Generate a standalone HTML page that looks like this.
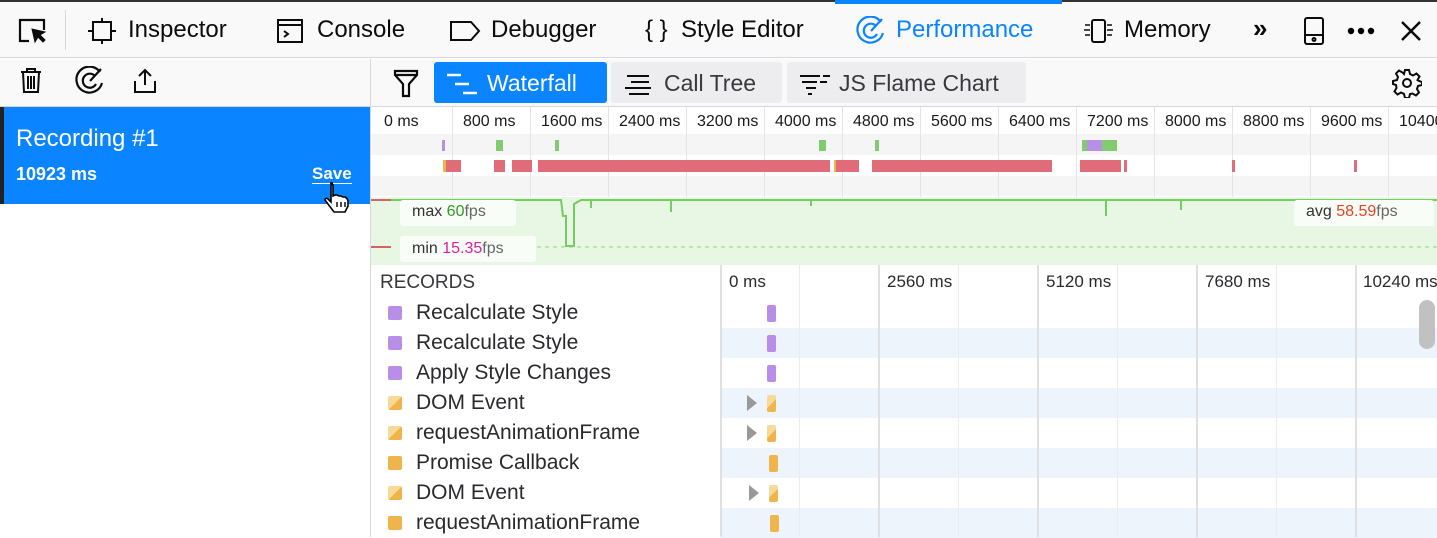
<!DOCTYPE html>
<html><head><style>
*{box-sizing:border-box;margin:0;padding:0}
body{width:1437px;height:537px;overflow:hidden;background:#fff;font-family:"Liberation Sans",sans-serif;position:relative;color:#0c0c0d}
.a{position:absolute;white-space:nowrap}
.tab{position:absolute;top:16px;font-size:24px;color:#0c0c0d;white-space:nowrap}
.tk{position:absolute;top:113px;font-size:16px;color:#18191a;white-space:nowrap}
.gl{position:absolute;top:107px;width:1px;height:90px;background:#e4e4e6}
.nm{position:absolute;left:416px;font-size:21px;color:#2a2a2e;white-space:nowrap}
.sq{position:absolute;left:388px;width:14px;height:14px;border-radius:2px}
.bar{position:absolute;width:10px;height:17px;border-radius:2px}
</style></head><body>
<div class="a" style="left:0;top:0;width:1437px;height:2px;background:#333"></div>
<div class="a" style="left:0;top:2px;width:1437px;height:56px;background:#f9f9fa;border-bottom:1px solid #d7d7db"></div>
<div class="a" style="left:835px;top:0;width:227px;height:4px;background:#0a84ff"></div>
<svg class="a" style="left:17px;top:17px" width="32" height="28" viewBox="0 0 32 28" fill="none" stroke="#0c0c0d" stroke-width="2.2"><path d="M12 24H3V3h24v10"/><path d="M15 12l3 13 3-5 5 5 2-2-5-5 5-3z" fill="#0c0c0d" stroke-width="1"/></svg>
<div class="a" style="left:65px;top:10px;width:1px;height:40px;background:#d7d7db"></div>
<svg class="a" style="left:87px;top:18px" width="30" height="26" viewBox="0 0 30 26" fill="none" stroke="#0c0c0d" stroke-width="2"><rect x="6" y="4" width="18" height="18"/><path d="M1 13h5M24 13h5M15 0v4M15 22v4"/></svg>
<div class="tab" style="left:128px">Inspector</div>
<svg class="a" style="left:276px;top:18px" width="28" height="26" viewBox="0 0 28 26" fill="none" stroke="#0c0c0d" stroke-width="2"><rect x="2" y="2" width="24" height="22"/><path d="M2 7h24M8 13l4 3-4 3"/></svg>
<div class="tab" style="left:317px">Console</div>
<svg class="a" style="left:449px;top:19px" width="32" height="24" viewBox="0 0 32 24" fill="none" stroke="#0c0c0d" stroke-width="2"><path d="M2 3h20l8 9-8 9H2z"/></svg>
<div class="tab" style="left:491px">Debugger</div>
<div class="tab" style="left:645px">{ }&nbsp;&nbsp;Style Editor</div>
<svg class="a" style="left:855px;top:16px" width="32" height="30" viewBox="0 0 32 30" fill="none" stroke="#0a84ff" stroke-width="2.2"><path d="M26 6A13 13 0 1 0 28 17"/><path d="M21 10A7 7 0 1 0 22 18"/><path d="M16 15L27 3"/></svg>
<div class="tab" style="left:896px;color:#0a84ff">Performance</div>
<svg class="a" style="left:1082px;top:17px" width="34" height="28" viewBox="0 0 34 28" fill="none" stroke="#0c0c0d" stroke-width="2"><rect x="10" y="3" width="13" height="22" rx="2"/><path d="M3 8h5M2 13h6M3 18h5M25 8h5M25 13h6M25 18h5" stroke-width="1.5"/></svg>
<div class="tab" style="left:1124px">Memory</div>
<div class="tab" style="left:1253px;font-weight:bold;font-size:26px;top:13px">»</div>
<svg class="a" style="left:1303px;top:16px" width="22" height="30" viewBox="0 0 22 30" fill="none" stroke="#0c0c0d" stroke-width="2"><rect x="2" y="2" width="18" height="26" rx="2"/><path d="M2 19h18"/><circle cx="11" cy="23.5" r="1.5"/></svg>
<svg class="a" style="left:1346px;top:26px" width="32" height="10"><circle cx="5" cy="5" r="3.2"/><circle cx="15" cy="5" r="3.2"/><circle cx="25" cy="5" r="3.2"/></svg>
<svg class="a" style="left:1399px;top:19px" width="24" height="24" viewBox="0 0 24 24" stroke="#0c0c0d" stroke-width="2.5"><path d="M3 3l18 18M21 3L3 21"/></svg>
<div class="a" style="left:0;top:59px;width:1437px;height:48px;background:#f9f9fa;border-bottom:1px solid #d7d7db"></div>
<div class="a" style="left:370px;top:59px;width:1px;height:478px;background:#d7d7db"></div>
<svg class="a" style="left:18px;top:67px" width="26" height="28" viewBox="0 0 26 28" fill="none" stroke="#0c0c0d" stroke-width="2"><path d="M3 5h20M9 5V2h8v3M5 5l1 20h14l1-20M10 9v13M13 9v13M16 9v13"/></svg>
<svg class="a" style="left:74px;top:66px" width="32" height="30" viewBox="0 0 32 30" fill="none" stroke="#0c0c0d" stroke-width="2.2"><path d="M26 6A13 13 0 1 0 28 17"/><path d="M21 10A7 7 0 1 0 22 18"/><path d="M16 15L27 3"/></svg>
<svg class="a" style="left:131px;top:67px" width="28" height="28" viewBox="0 0 28 28" fill="none" stroke="#0c0c0d" stroke-width="2"><path d="M14 18V3M8 9l6-6 6 6M4 14v11h20V14"/></svg>
<svg class="a" style="left:393px;top:68px" width="26" height="30" viewBox="0 0 26 30" fill="none" stroke="#0c0c0d" stroke-width="2.2"><path d="M2 3h22v4l-8 9v12h-6V16L2 7z"/><path d="M2 7h22"/></svg>
<div class="a" style="left:434px;top:62px;width:173px;height:41px;background:#0a84ff;border-radius:3px"></div>
<svg class="a" style="left:445px;top:72px" width="34" height="24" viewBox="0 0 34 24" stroke="#fff" stroke-width="2.5"><path d="M2 3h14M10 12h14M18 21h14"/></svg>
<div class="tab" style="left:487px;top:70px;color:#fff;font-size:23px">Waterfall</div>
<div class="a" style="left:611px;top:62px;width:171px;height:41px;background:#ededf0;border-radius:3px"></div>
<svg class="a" style="left:623px;top:72px" width="30" height="24" viewBox="0 0 30 24" stroke="#0c0c0d" stroke-width="2"><path d="M4 4h22M8 10h18M2 16h26M6 22h20"/></svg>
<div class="tab" style="left:664px;top:70px;font-size:23px;color:#38383d">Call Tree</div>
<div class="a" style="left:787px;top:62px;width:239px;height:41px;background:#ededf0;border-radius:3px"></div>
<svg class="a" style="left:798px;top:72px" width="34" height="24" viewBox="0 0 34 24" stroke="#0c0c0d" stroke-width="2"><path d="M2 4h20M25 4h7M4 10h15M22 10h7M8 16h10M10 22h4"/></svg>
<div class="tab" style="left:839px;top:70px;font-size:23px;color:#38383d">JS Flame Chart</div>
<svg class="a" style="left:1392px;top:68px" width="30" height="30" viewBox="0 0 30 30" fill="none" stroke="#0c0c0d" stroke-width="2"><path d="M13 2h4l1 4 3 1.5 3.5-2 3 3-2 3.5L27 13l3 1v3l-4 1-1 3 2 3.5-3 3-3.5-2L18 26l-1 4h-4l-1-4-3-1.5-3.5 2-3-3 2-3.5L4 17l-3-1v-3l4-1 1-3-2-3.5 3-3 3.5 2L12 6z"/><circle cx="15" cy="15" r="4"/></svg>
<div class="a" style="left:0;top:107px;width:4px;height:97px;background:#222"></div>
<div class="a" style="left:4px;top:107px;width:366px;height:97px;background:#0a84ff"></div>
<div class="a" style="left:16px;top:125px;color:#fff;font-size:24px">Recording #1</div>
<div class="a" style="left:16px;top:164px;color:#fff;font-size:18px;font-weight:bold">10923 ms</div>
<div class="a" style="left:312px;top:164px;color:#fff;font-size:17px;font-weight:bold;border-bottom:1px solid #fff;line-height:19px">Save</div>
<svg class="a" style="left:322px;top:180px" width="34" height="34" viewBox="0 0 34 34"><path d="M8 3c2 0 3 1 3 3v10l2-1h2l2 1h2l2 1h2c2 1 3 3 3 5v4l-3 6H12l-6-8-3-4c0-2 2-2 3-1l3 3V6c0-2 1-3 2-3z" fill="#fff" stroke="#000" stroke-width="1.6"/><path d="M15 22v5M19 22v5M23 22v5" stroke="#000" stroke-width="1.4"/></svg>
<div class="a" style="left:371px;top:134px;width:1066px;height:21px;background:#f5f5f6"></div>
<div class="a" style="left:371px;top:176px;width:1066px;height:20px;background:#f5f5f6"></div>
<div class="gl" style="left:452px"></div><div class="gl" style="left:530px"></div><div class="gl" style="left:608px"></div><div class="gl" style="left:686px"></div><div class="gl" style="left:764px"></div><div class="gl" style="left:842px"></div><div class="gl" style="left:920px"></div><div class="gl" style="left:998px"></div><div class="gl" style="left:1076px"></div><div class="gl" style="left:1154px"></div><div class="gl" style="left:1232px"></div><div class="gl" style="left:1310px"></div><div class="gl" style="left:1388px"></div>
<div class="tk" style="left:384px">0 ms</div><div class="tk" style="left:463px">800 ms</div><div class="tk" style="left:541px">1600 ms</div><div class="tk" style="left:619px">2400 ms</div><div class="tk" style="left:697px">3200 ms</div><div class="tk" style="left:775px">4000 ms</div><div class="tk" style="left:853px">4800 ms</div><div class="tk" style="left:931px">5600 ms</div><div class="tk" style="left:1009px">6400 ms</div><div class="tk" style="left:1087px">7200 ms</div><div class="tk" style="left:1165px">8000 ms</div><div class="tk" style="left:1243px">8800 ms</div><div class="tk" style="left:1321px">9600 ms</div><div class="tk" style="left:1399px">10400 ms</div>
<div class="a" style="left:442px;top:140px;width:3px;height:11px;background:#b98ee9"></div>
<div class="a" style="left:496px;top:140px;width:7px;height:11px;background:#80cc6e"></div>
<div class="a" style="left:555px;top:140px;width:4px;height:11px;background:#80cc6e"></div>
<div class="a" style="left:819px;top:140px;width:7px;height:11px;background:#80cc6e"></div>
<div class="a" style="left:875px;top:140px;width:4px;height:11px;background:#80cc6e"></div>
<div class="a" style="left:1082px;top:140px;width:35px;height:11px;background:#80cc6e"></div>
<div class="a" style="left:1087px;top:140px;width:15px;height:11px;background:#b98ee9"></div>
<div class="a" style="left:443px;top:160px;width:18px;height:12px;background:#e06c7a;border-left:3px solid #f0b54a"></div>
<div class="a" style="left:494px;top:160px;width:11px;height:12px;background:#e06c7a"></div>
<div class="a" style="left:512px;top:160px;width:20px;height:12px;background:#e06c7a"></div>
<div class="a" style="left:538px;top:160px;width:292px;height:12px;background:#e06c7a"></div>
<div class="a" style="left:834px;top:160px;width:25px;height:12px;background:#e06c7a;border-left:2px solid #f0b54a"></div>
<div class="a" style="left:872px;top:160px;width:180px;height:12px;background:#e06c7a"></div>
<div class="a" style="left:1080px;top:160px;width:41px;height:12px;background:#e06c7a"></div>
<div class="a" style="left:1124px;top:160px;width:3px;height:12px;background:#e06c7a"></div>
<div class="a" style="left:1232px;top:160px;width:3px;height:12px;background:#e06c7a"></div>
<div class="a" style="left:1354px;top:160px;width:3px;height:12px;background:#e06c7a"></div>
<div class="a" style="left:371px;top:197px;width:1066px;height:68px;background:#e8f6e4"></div>
<svg class="a" style="left:371px;top:196px" width="1066" height="70"><path d="M0 4H20M0 51H20" stroke="#c33" stroke-width="1.5"/><path d="M20 4H190L192 20H195V50H203V8L210 4H1066" stroke="#75cc63" stroke-width="2" fill="none"/><path d="M30 51H1066" stroke="#8fd07f" stroke-dasharray="4 4"/><path d="M220 4v8M300 4v12M440 4v6M735 4v16M810 4v10" stroke="#75cc63" stroke-width="2"/></svg>
<div class="a" style="left:400px;top:200px;width:116px;height:26px;background:#f9fdf8;border-radius:3px"></div>
<div class="a" style="left:412px;top:203px;font-size:16px;color:#333">max <span style="color:#2e9a21">60</span><span style="color:#666">fps</span></div>
<div class="a" style="left:400px;top:236px;width:136px;height:26px;background:#f9fdf8;border-radius:3px"></div>
<div class="a" style="left:412px;top:240px;font-size:16px;color:#333">min <span style="color:#dd1ea3">15.35</span><span style="color:#666">fps</span></div>
<div class="a" style="left:1294px;top:200px;width:140px;height:26px;background:#f9fdf8;border-radius:3px"></div>
<div class="a" style="left:1306px;top:203px;font-size:16px;color:#333">avg <span style="color:#e5431f">58.59</span><span style="color:#666">fps</span></div>
<div class="a" style="left:721px;top:328px;width:716px;height:30px;background:#edf4fc"></div>
<div class="a" style="left:721px;top:388px;width:716px;height:30px;background:#edf4fc"></div>
<div class="a" style="left:721px;top:448px;width:716px;height:30px;background:#edf4fc"></div>
<div class="a" style="left:721px;top:508px;width:716px;height:30px;background:#edf4fc"></div>
<div class="a" style="left:720px;top:265px;width:2px;height:272px;background:#e0e0e2"></div>
<div class="a" style="left:799px;top:265px;width:1px;height:272px;background:#ececee"></div>
<div class="a" style="left:878px;top:265px;width:2px;height:272px;background:#e0e0e2"></div>
<div class="a" style="left:958px;top:265px;width:1px;height:272px;background:#ececee"></div>
<div class="a" style="left:1037px;top:265px;width:2px;height:272px;background:#e0e0e2"></div>
<div class="a" style="left:1117px;top:265px;width:1px;height:272px;background:#ececee"></div>
<div class="a" style="left:1196px;top:265px;width:2px;height:272px;background:#e0e0e2"></div>
<div class="a" style="left:1276px;top:265px;width:1px;height:272px;background:#ececee"></div>
<div class="a" style="left:1355px;top:265px;width:2px;height:272px;background:#e0e0e2"></div>
<div class="a" style="left:380px;top:272px;font-size:19px;color:#38383d">RECORDS</div>
<div class="a" style="left:729px;top:272px;font-size:17px;color:#2a2a2e">0 ms</div>
<div class="a" style="left:887px;top:272px;font-size:17px;color:#2a2a2e">2560 ms</div>
<div class="a" style="left:1046px;top:272px;font-size:17px;color:#2a2a2e">5120 ms</div>
<div class="a" style="left:1205px;top:272px;font-size:17px;color:#2a2a2e">7680 ms</div>
<div class="a" style="left:1363px;top:272px;font-size:17px;color:#2a2a2e">10240 ms</div>
<div class="sq" style="top:306px;background:#b98ee9"></div><div class="nm" style="top:301px">Recalculate Style</div><div class="bar" style="left:767px;top:305px;background:#b98ee9;width:9px"></div>
<div class="sq" style="top:336px;background:#b98ee9"></div><div class="nm" style="top:331px">Recalculate Style</div><div class="bar" style="left:767px;top:335px;background:#b98ee9;width:9px"></div>
<div class="sq" style="top:366px;background:#b98ee9"></div><div class="nm" style="top:361px">Apply Style Changes</div><div class="bar" style="left:767px;top:365px;background:#b98ee9;width:9px"></div>
<div class="sq" style="top:396px;background:linear-gradient(135deg,#f7d99a 50%,#f0b54a 50%)"></div><div class="nm" style="top:391px">DOM Event</div><div class="a" style="left:747px;top:395px;border-left:10px solid #999;border-top:8px solid transparent;border-bottom:8px solid transparent"></div><div class="bar" style="left:767px;top:395px;background:linear-gradient(135deg,#f7d99a 50%,#f0b54a 50%);width:9px"></div>
<div class="sq" style="top:426px;background:linear-gradient(135deg,#f7d99a 50%,#f0b54a 50%)"></div><div class="nm" style="top:421px">requestAnimationFrame</div><div class="a" style="left:747px;top:425px;border-left:10px solid #999;border-top:8px solid transparent;border-bottom:8px solid transparent"></div><div class="bar" style="left:767px;top:425px;background:linear-gradient(135deg,#f7d99a 50%,#f0b54a 50%);width:9px"></div>
<div class="sq" style="top:456px;background:#f0b54a"></div><div class="nm" style="top:451px">Promise Callback</div><div class="bar" style="left:769px;top:455px;background:#f0b54a;width:9px"></div>
<div class="sq" style="top:486px;background:linear-gradient(135deg,#f7d99a 50%,#f0b54a 50%)"></div><div class="nm" style="top:481px">DOM Event</div><div class="a" style="left:749px;top:485px;border-left:10px solid #999;border-top:8px solid transparent;border-bottom:8px solid transparent"></div><div class="bar" style="left:769px;top:485px;background:linear-gradient(135deg,#f7d99a 50%,#f0b54a 50%);width:9px"></div>
<div class="sq" style="top:516px;background:#f0b54a"></div><div class="nm" style="top:511px">requestAnimationFrame</div><div class="bar" style="left:770px;top:515px;background:#f0b54a;width:9px"></div>
<div class="a" style="left:1419px;top:300px;width:16px;height:49px;background:#c1c1c1;border-radius:8px"></div>
</body></html>
